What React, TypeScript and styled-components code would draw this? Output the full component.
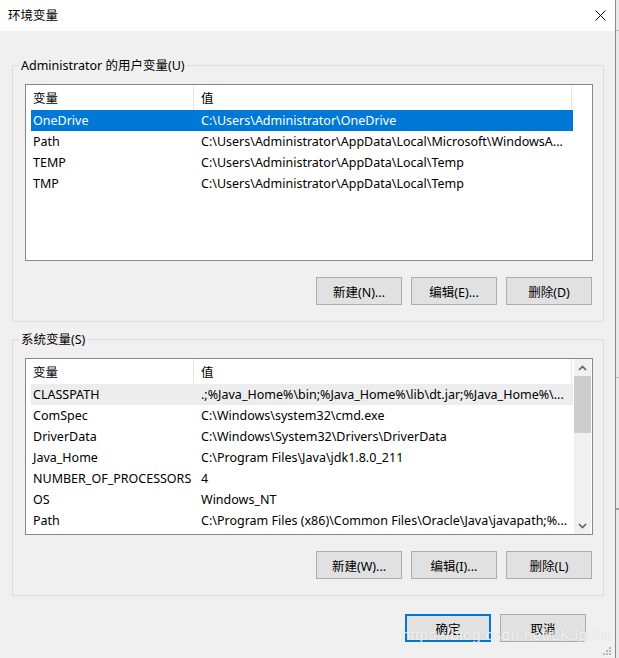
import styled, { createGlobalStyle } from "styled-components";

type Variable = [string, string];

const userVars: Variable[] = [
  ["OneDrive", "C:\\Users\\Administrator\\OneDrive"],
  ["Path", "C:\\Users\\Administrator\\AppData\\Local\\Microsoft\\WindowsA..."],
  ["TEMP", "C:\\Users\\Administrator\\AppData\\Local\\Temp"],
  ["TMP", "C:\\Users\\Administrator\\AppData\\Local\\Temp"],
];

const systemVars: Variable[] = [
  ["CLASSPATH", ".;%Java_Home%\\bin;%Java_Home%\\lib\\dt.jar;%Java_Home%\\..."],
  ["ComSpec", "C:\\Windows\\system32\\cmd.exe"],
  ["DriverData", "C:\\Windows\\System32\\Drivers\\DriverData"],
  ["Java_Home", "C:\\Program Files\\Java\\jdk1.8.0_211"],
  ["NUMBER_OF_PROCESSORS", "4"],
  ["OS", "Windows_NT"],
  ["Path", "C:\\Program Files (x86)\\Common Files\\Oracle\\Java\\javapath;%..."],
];

const GlobalStyle = createGlobalStyle`
  html, body {
    margin: 0;
    padding: 0;
    background: #dadada;
  }
  * {
    box-sizing: border-box;
  }
  body {
    font-family: "Noto Sans", "Noto Sans CJK SC", sans-serif;
    font-size: 12.5px;
    color: #000;
  }
`;

const Screen = styled.div`
  display: flex;
  width: 619px;
  height: 658px;
  overflow: hidden;
`;

const Dialog = styled.div`
  position: relative;
  width: 616px;
  height: 658px;
  flex-shrink: 0;
  background: #f0f0f0;
  border-right: 1px solid #8a8a8a;
  display: flex;
  flex-direction: column;
`;

const Beyond = styled.div`
  flex: 1;
  background: linear-gradient(
    to bottom,
    #e9e9e9 0 30px,
    #b9b9b9 30px 31px,
    #e9e9e9 31px 377px,
    #b9b9b9 377px 378px,
    #e9e9e9 378px 508px,
    #a0a0a0 508px 510px,
    #e9e9e9 510px
  );
`;

const TitleBar = styled.div`
  height: 31px;
  background: #fff;
  display: flex;
  align-items: center;
  justify-content: space-between;
  padding: 0 9px 0 8px;
  flex-shrink: 0;
`;

const Title = styled.span`
  font-size: 12.5px;
  line-height: 16px;
`;

const CloseButton = styled.div`
  width: 12px;
  height: 12px;
  display: flex;
  align-items: center;
  justify-content: center;
`;

const Body = styled.div`
  display: flex;
  flex-direction: column;
  padding: 34px 11px 0 12px;
`;

const GroupBox = styled.div<{ $gap?: number }>`
  position: relative;
  margin-top: ${(p) => p.$gap ?? 0}px;
  border: 1px solid #dcdcdc;
  padding: 18px 10px 16px 12px;
`;

const GroupLabel = styled.span`
  position: absolute;
  top: -9px;
  left: 6px;
  padding: 0 2px;
  background: #f0f0f0;
  line-height: 17px;
`;

const ListView = styled.div`
  height: 177px;
  border: 1px solid #828790;
  background: #fff;
  display: flex;
`;

const ListContent = styled.div`
  flex: 1;
  min-width: 0;
  display: flex;
  flex-direction: column;
`;

const HeaderRow = styled.div`
  display: flex;
  height: 24px;
  flex-shrink: 0;
  margin-bottom: 1px;
`;

const HeaderCell = styled.div<{ $width: number }>`
  width: ${(p) => p.$width}px;
  flex-shrink: 0;
  padding-left: 7px;
  border-right: 1px solid #e5e5e5;
  display: flex;
  align-items: center;
`;

const Row = styled.div<{ $state?: "selected" | "hover" }>`
  display: flex;
  height: 21px;
  width: 542px;
  margin-left: 5px;
  align-items: center;
  white-space: nowrap;
  background: ${(p) =>
    p.$state === "selected" ? "#0078d7" : p.$state === "hover" ? "#ededed" : "transparent"};
  color: ${(p) => (p.$state === "selected" ? "#fff" : "#000")};
`;

const NameCell = styled.div`
  width: 163px;
  flex-shrink: 0;
  padding-left: 2px;
  overflow: hidden;
`;

const ValueCell = styled.div`
  flex: 1;
  padding-left: 7px;
  overflow: hidden;
`;

const ScrollBar = styled.div`
  width: 17px;
  margin-right: 1px;
  background: #f0f0f0;
  display: flex;
  flex-direction: column;
  align-items: center;
`;

const ArrowBox = styled.div`
  height: 17px;
  width: 17px;
  display: flex;
  align-items: center;
  justify-content: center;
  flex-shrink: 0;
`;

const Thumb = styled.div`
  width: 17px;
  height: 57px;
  background: #cdcdcd;
`;

const Track = styled.div`
  flex: 1;
`;

const ButtonRow = styled.div`
  display: flex;
  justify-content: flex-end;
  gap: 9px;
  margin-top: 16px;
  padding-right: 1px;
`;

const Button = styled.div<{ $default?: boolean }>`
  width: 86px;
  height: 28px;
  background: #e1e1e1;
  border: ${(p) => (p.$default ? "2px solid #0078d7" : "1px solid #adadad")};
  display: flex;
  align-items: center;
  justify-content: center;
  white-space: nowrap;
`;

const Footer = styled.div`
  display: flex;
  justify-content: flex-end;
  gap: 9px;
  margin-top: 18px;
  padding-right: 18px;
`;

const Watermark = styled.div`
  position: absolute;
  right: 5px;
  top: 626px;
  font-family: "Liberation Sans", Arial, sans-serif;
  font-size: 15.5px;
  letter-spacing: 0.3px;
  color: rgba(255, 255, 255, 0.8);
  text-shadow: 0 0 1px rgba(120, 120, 120, 0.35);
  pointer-events: none;
`;

const Grip = styled.svg`
  position: absolute;
  right: 3px;
  bottom: 2px;
`;

function Chevron({ up }: { up?: boolean }) {
  return (
    <svg width="9" height="6" viewBox="0 0 9 6">
      <path
        d={up ? "M1 5 L4.5 1.5 L8 5" : "M1 1 L4.5 4.5 L8 1"}
        fill="none"
        stroke="#606060"
        strokeWidth="1.6"
      />
    </svg>
  );
}

function VarList({
  rows,
  selected,
  hover,
  scroll,
}: {
  rows: Variable[];
  selected?: number;
  hover?: number;
  scroll?: boolean;
}) {
  return (
    <ListView>
      <ListContent>
        <HeaderRow>
          <HeaderCell $width={168}>变量</HeaderCell>
          <HeaderCell $width={378}>值</HeaderCell>
        </HeaderRow>
        {rows.map(([name, value], i) => (
          <Row
            key={name + i}
            $state={i === selected ? "selected" : i === hover ? "hover" : undefined}
          >
            <NameCell>{name}</NameCell>
            <ValueCell>{value}</ValueCell>
          </Row>
        ))}
      </ListContent>
      {scroll && (
        <ScrollBar>
          <ArrowBox>
            <Chevron up />
          </ArrowBox>
          <Thumb />
          <Track />
          <ArrowBox>
            <Chevron />
          </ArrowBox>
        </ScrollBar>
      )}
    </ListView>
  );
}

export default function App() {
  return (
    <>
      <GlobalStyle />
      <Screen>
        <Dialog>
          <TitleBar>
            <Title>环境变量</Title>
            <CloseButton>
              <svg width="11" height="11" viewBox="0 0 11 11">
                <path d="M0.5 0.5 L10.5 10.5 M10.5 0.5 L0.5 10.5" stroke="#000" strokeWidth="1" />
              </svg>
            </CloseButton>
          </TitleBar>
          <Body>
            <GroupBox>
              <GroupLabel>Administrator 的用户变量(U)</GroupLabel>
              <VarList rows={userVars} selected={0} />
              <ButtonRow>
                <Button>新建(N)...</Button>
                <Button>编辑(E)...</Button>
                <Button>删除(D)</Button>
              </ButtonRow>
            </GroupBox>
            <GroupBox $gap={17}>
              <GroupLabel>系统变量(S)</GroupLabel>
              <VarList rows={systemVars} hover={0} scroll />
              <ButtonRow>
                <Button>新建(W)...</Button>
                <Button>编辑(I)...</Button>
                <Button>删除(L)</Button>
              </ButtonRow>
            </GroupBox>
            <Footer>
              <Button $default>确定</Button>
              <Button>取消</Button>
            </Footer>
          </Body>
          <Watermark>https://blog.csdn.net/LKJgdut</Watermark>
          <Grip width="9" height="9" viewBox="0 0 9 9">
            {[
              [7, 1], [4, 4], [7, 4], [1, 7], [4, 7], [7, 7],
            ].map(([x, y]) => (
              <rect key={`${x}-${y}`} x={x - 1} y={y - 1} width="2" height="2" fill="#b8b8b8" />
            ))}
          </Grip>
        </Dialog>
        <Beyond />
      </Screen>
    </>
  );
}
